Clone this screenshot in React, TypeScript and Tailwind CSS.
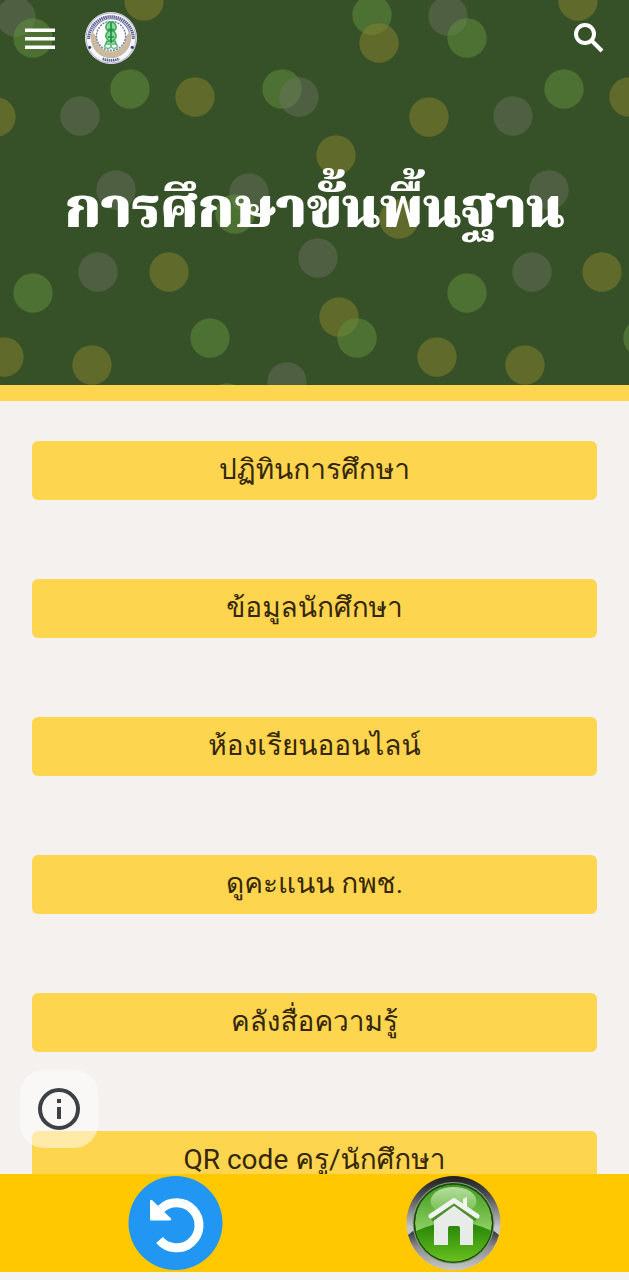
import type { ReactNode } from "react";

type DotTone = "green" | "olive" | "grey";
type Dot = [x: number, y: number, tone: DotTone];

const dotFill: Record<DotTone, string> = {
  green: "#62903f",
  olive: "#88822f",
  grey: "#6f7364",
};

const dots: Dot[] = [
  [16, 17, "grey"],
  [33, 38, "green"],
  [144, 1, "olive"],
  [130, 89, "green"],
  [195, 97, "olive"],
  [80, 116, "grey"],
  [-4, 117, "olive"],
  [282, 89, "green"],
  [299, 97, "grey"],
  [116, 190, "grey"],
  [249, 193, "grey"],
  [235, 214, "green"],
  [372, 15, "green"],
  [379, 43, "olive"],
  [448, 16, "grey"],
  [467, 38, "green"],
  [578, 1, "olive"],
  [564, 89, "green"],
  [629, 97, "olive"],
  [429, 117, "olive"],
  [513, 116, "grey"],
  [336, 155, "olive"],
  [549, 190, "grey"],
  [399, 219, "olive"],
  [33, 293, "green"],
  [98, 272, "grey"],
  [169, 272, "olive"],
  [318, 258, "grey"],
  [532, 272, "grey"],
  [602, 272, "olive"],
  [467, 293, "green"],
  [339, 317, "olive"],
  [357, 338, "green"],
  [210, 338, "green"],
  [643, 338, "green"],
  [4, 357, "olive"],
  [437, 357, "olive"],
  [92, 365, "olive"],
  [525, 365, "olive"],
  [287, 382, "grey"],
  [227, 403, "green"],
];

const menuItems = [
  "ปฏิทินการศึกษา",
  "ข้อมูลนักศึกษา",
  "ห้องเรียนออนไลน์",
  "ดูคะแนน กพช.",
  "คลังสื่อความรู้",
  "QR code ครู/นักศึกษา",
];

export default function App() {
  return (
    <div className="flex h-screen flex-col bg-[#f5f1ee] font-['Roboto','Loma',sans-serif]">
      <div className="min-h-0 flex-1 overflow-y-auto [scrollbar-width:none]">
        <Hero />
        <MenuList />
      </div>
      <BottomBar />
    </div>
  );
}

const Hero = () => (
  <header className="relative overflow-hidden border-b-16 border-[#fed54f] bg-[#365027]">
    <DotPattern />
    <div className="relative flex h-19 items-center px-5">
      <IconButton label="Menu">
        <svg viewBox="0 0 40 40" className="size-10" fill="#fff">
          <path d="M5 10.5h30V14H5zM5 19h30v3.500H5zM5 27.500h30V31H5z" />
        </svg>
      </IconButton>
      <a href="#home" aria-label="Home" className="ml-6">
        <SchoolSeal />
      </a>
      <div className="flex-1" />
      <IconButton label="Search">
        <svg
          viewBox="0 0 40 40"
          className="size-10"
          fill="none"
          stroke="#fff"
          strokeWidth="4"
        >
          <circle cx="16" cy="16" r="9" />
          <path d="M22 22l11 11" />
        </svg>
      </IconButton>
    </div>
    <h1 className="relative flex h-[309px] justify-center pt-23 text-center font-['Noto_Serif_Thai','Liberation_Serif',serif] text-[56px] leading-[88px] font-black whitespace-nowrap text-white">
      การศึกษาขั้นพื้นฐาน
    </h1>
  </header>
);

const DotPattern = () => (
  <svg
    viewBox="0 0 629 385"
    preserveAspectRatio="xMidYMin slice"
    className="absolute inset-0 size-full"
    aria-hidden="true"
  >
    {dots.map(([x, y, tone]) => (
      <circle
        key={`${x}-${y}`}
        cx={x}
        cy={y}
        r="19.7"
        fill={dotFill[tone]}
        fillOpacity={tone === "grey" ? 0.45 : 0.52}
      />
    ))}
  </svg>
);

const IconButton = ({
  label,
  children,
}: {
  label: string;
  children: ReactNode;
}) => (
  <button type="button" aria-label={label} className="cursor-pointer">
    {children}
  </button>
);

const SchoolSeal = () => (
  <svg viewBox="0 0 52 52" className="size-[54px]">
    <circle cx="26" cy="26" r="25" fill="#f7f7fb" />
    <circle cx="26" cy="26" r="24" fill="none" stroke="#b4b5cf" />
    <path
      d="M4.5 27a21.5 21.5 0 0 1 43 0"
      fill="none"
      stroke="#5e6391"
      strokeWidth="3"
      strokeDasharray="1.4 .6"
    />
    <path
      d="M18 46a21.5 21.5 0 0 0 16 0"
      fill="none"
      stroke="#5e6391"
      strokeWidth="2.6"
      strokeDasharray="1.4 .6"
    />
    <circle cx="26" cy="26" r="18.5" fill="#fff" stroke="#777ba6" />
    <path d="M8 20a19 19 0 1 0 36 0l-4 5a14 14 0 0 1-28 0z" fill="#cabb9d" />
    <circle
      cx="26"
      cy="24"
      r="14"
      fill="#fff"
      stroke="#777ba6"
      strokeWidth="1.4"
      strokeDasharray="2 1"
    />
    <circle cx="5.5" cy="35" r="1.5" fill="#3c416d" />
    <circle cx="46.5" cy="35" r="1.5" fill="#3c416d" />
    <g fill="#8bd79c" stroke="#36ad55" strokeWidth="1.4">
      <circle cx="26" cy="15.5" r="5" />
      <circle cx="26" cy="24" r="5" />
      <path d="M22 29h8l2 5H20z" />
    </g>
    <path d="M26 11v20M23 18h6M23 25h6" stroke="#218e41" strokeWidth="1.6" />
    <g fill="#fff" stroke="#63bd7a" strokeWidth="1.2">
      <ellipse cx="23" cy="34" rx="3" ry="2" />
      <ellipse cx="29" cy="34" rx="3" ry="2" />
    </g>
  </svg>
);

const MenuList = () => (
  <main className="px-8 pt-10 pb-20">
    <nav className="flex flex-col gap-[79px]">
      {menuItems.map((item) => (
        <a
          key={item}
          href="#section"
          className="flex h-[59px] items-center justify-center rounded-md bg-[#fed54f] pb-0.5 text-[28px] leading-10 whitespace-nowrap text-[#35270c]"
        >
          {item}
        </a>
      ))}
    </nav>
  </main>
);

const BottomBar = () => (
  <footer className="relative border-b-8 border-[#f3f3f1] bg-[#ffc800]">
    <button
      type="button"
      aria-label="Page information"
      className="absolute bottom-full left-5 mb-[26px] flex size-[78px] items-center justify-center rounded-3xl bg-white/50"
    >
      <svg viewBox="0 0 42 42" className="size-[42px]">
        <circle
          cx="21"
          cy="21"
          r="19"
          fill="none"
          stroke="#3d4045"
          strokeWidth="4"
        />
        <path d="M19 11h4v4h-4zM19 19h4v12h-4z" fill="#3d4045" />
      </svg>
    </button>
    <nav className="grid h-[98px] grid-cols-2 items-center px-9">
      <a href="#back" aria-label="Back" className="justify-self-center">
        <BackBadge />
      </a>
      <a href="#home" aria-label="Home" className="justify-self-center">
        <HomeBadge />
      </a>
    </nav>
  </footer>
);

const BackBadge = () => (
  <svg viewBox="0 0 96 96" className="size-24">
    <circle cx="48.5" cy="48" r="47" fill="#2196f3" />
    <path
      d="M34 34A22.500 22.500 0 1 1 32.500 65"
      fill="none"
      stroke="#fff"
      strokeWidth="9"
    />
    <path
      d="M23 26.5q0-3 2.5-1l18 17.5q2 2.5-1 2.5H24q-1 0-1-1z"
      fill="#fff"
    />
  </svg>
);

const HomeBadge = () => (
  <svg viewBox="0 0 96 96" className="size-24">
    <defs>
      <linearGradient id="rimTop" x1="0" y1="0" x2="0" y2="1">
        <stop offset="0" stopColor="#1e1e20" />
        <stop offset=".2" stopColor="#4b4b50" />
        <stop offset=".55" stopColor="#c6c6cb" />
      </linearGradient>
      <linearGradient id="rimBottom" x1="0" y1="0" x2="0" y2="1">
        <stop offset="0" stopColor="#333338" />
        <stop offset=".4" stopColor="#8c8c90" />
        <stop offset="1" stopColor="#c8c8c8" />
      </linearGradient>
      <linearGradient id="glassTop" x1="0" y1="0" x2="0" y2="1">
        <stop offset="0" stopColor="#3f981d" />
        <stop offset=".6" stopColor="#8fd063" />
        <stop offset="1" stopColor="#a1db75" />
      </linearGradient>
      <linearGradient id="glassBottom" x1="0" y1="0" x2="0" y2="1">
        <stop offset="0" stopColor="#238208" />
        <stop offset="1" stopColor="#6cc41d" />
      </linearGradient>
      <linearGradient id="shine" x1="0" y1="0" x2="0" y2="1">
        <stop offset="0" stopColor="#b5dd9f" />
        <stop offset="1" stopColor="#6fbd49" />
      </linearGradient>
      <clipPath id="glass">
        <circle cx="47.5" cy="48" r="38.5" />
      </clipPath>
    </defs>
    <circle cx="47.5" cy="48" r="47" fill="url(#rimTop)" />
    <path
      d="M2 60l5-4q40 8 81 0l5 4a47 47 0 0 1-91 0z"
      fill="url(#rimBottom)"
    />
    <circle cx="47.5" cy="48" r="41" fill="#87a17e" />
    <circle cx="47.5" cy="48" r="40" fill="#1d4a10" />
    <g clipPath="url(#glass)">
      <circle cx="47.5" cy="48" r="38.5" fill="url(#glassTop)" />
      <path d="M8 57q40-20 80 0v32H8z" fill="url(#glassBottom)" />
      <ellipse cx="47.5" cy="26" rx="23" ry="14" fill="url(#shine)" />
    </g>
    <path
      d="M28 43l20-16 19 16v27H54V53q0-2-2-2h-8q-2 0-2 2v17H28z"
      fill="#e8ece8"
    />
    <path
      d="M25 44l23-17 23 17"
      fill="none"
      stroke="#4e8f30"
      strokeWidth="6"
      strokeLinejoin="round"
    />
    <path d="M57 24l4-2v14l-4-4z" fill="#f4f6f3" />
    <path
      d="M25 41l23-15.500L71 41"
      fill="none"
      stroke="#f1f3f0"
      strokeWidth="5"
      strokeLinecap="round"
      strokeLinejoin="round"
    />
  </svg>
);
